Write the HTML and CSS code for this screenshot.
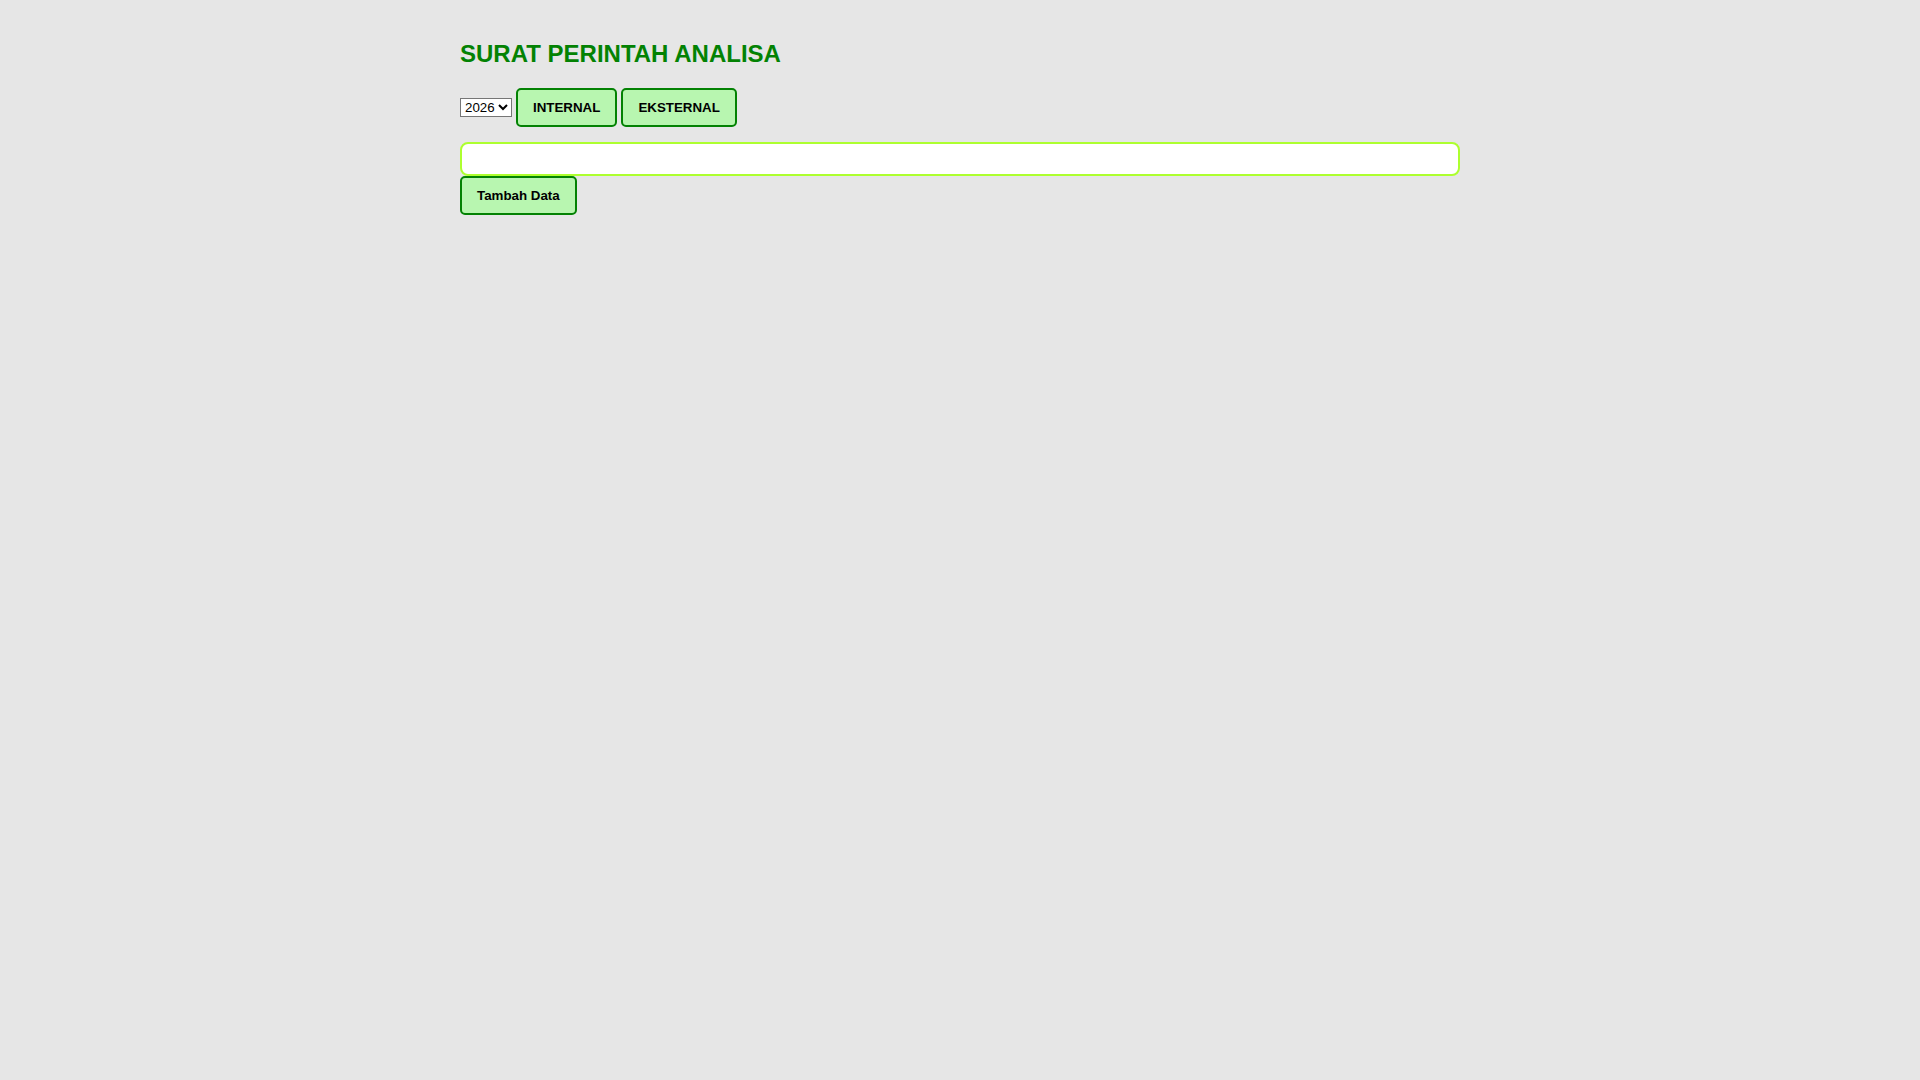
FILE: index.html
```html
<!DOCTYPE html>
<html lang="id">
<head>
<meta charset="utf-8">
<title>Surat Perintah Analisa</title>
<link rel="stylesheet" href="styles.css">
</head>
<body>
<div class="container">
  <h1 class="title">SURAT PERINTAH ANALISA</h1>
  <div class="toolbar">
    <select class="year">
      <option>2026</option>
      <option>2025</option>
      <option>2024</option>
    </select>
    <button class="btn">INTERNAL</button>
    <button class="btn">EKSTERNAL</button>
  </div>
  <input class="search" type="text">
  <div class="actions">
    <button class="btn">Tambah Data</button>
  </div>
</div>
</body>
</html>
```

FILE: styles.css
```css
html, body {
  margin: 0;
  padding: 0;
  background: #e6e6e6;
  font-family: "Liberation Sans", Arial, sans-serif;
}
.container {
  width: 1000px;
  margin: 0 auto;
  padding-top: 40px;
}
.title {
  margin: 0;
  font-size: 24px;
  font-weight: bold;
  line-height: 27px;
  color: #038203;
}
.toolbar {
  display: flex;
  align-items: center;
  gap: 4px;
  margin-top: 21px;
}
.year {
  font-family: "Liberation Sans", Arial, sans-serif;
  font-size: 13.33px;
  height: 19px;
  padding: 0;
  border: 1px solid #767676;
  border-radius: 0;
  background: #fff;
  color: #000;
}
.btn {
  font-family: "Liberation Sans", Arial, sans-serif;
  font-size: 13.33px;
  font-weight: bold;
  line-height: 15px;
  padding: 10px 15px;
  background: #b8f6b0;
  border: 2px solid #038203;
  border-radius: 5px;
  color: #000;
}
.search {
  display: block;
  box-sizing: border-box;
  width: 1000px;
  height: 34px;
  margin-top: 15px;
  border: 2px solid #adff2f;
  border-radius: 8px;
  background: #fff;
  outline: none;
}
.actions {
  display: flex;
}
```
